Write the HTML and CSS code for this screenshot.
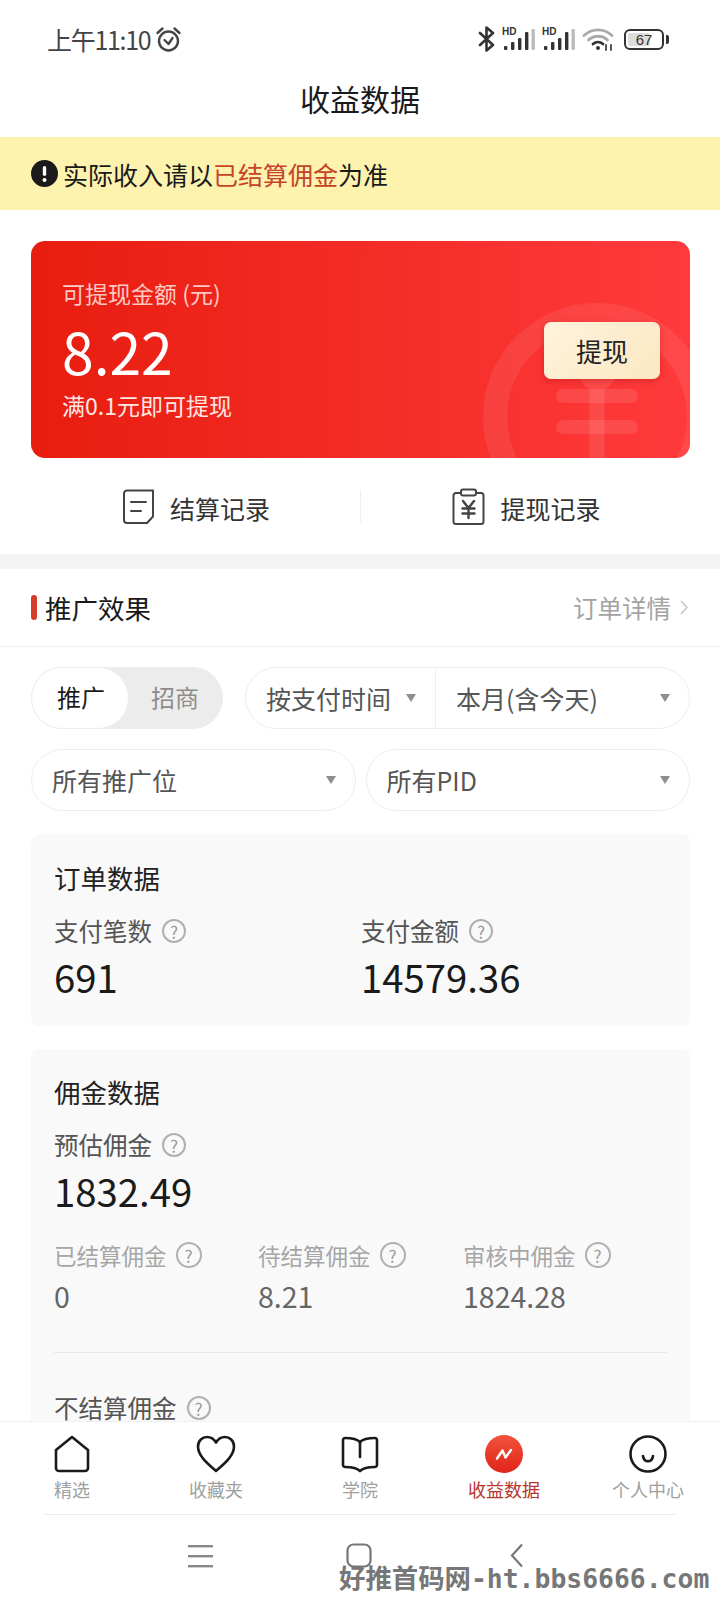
FILE: index.html
```html
<!DOCTYPE html>
<html lang="zh-CN">
<head>
    <meta charset="UTF-8">
    <meta name="viewport" content="width=device-width, initial-scale=1.0">
    <title>收益数据</title>
    <link rel="stylesheet" href="styles.css">
</head>
<body>
    <div class="phone">
        <!-- 状态栏 -->
        <div class="status-bar">
            <div class="status-left">
                <span class="status-time">上午11:10</span>
                <svg width="27" height="27" viewBox="0 0 27 27" fill="none" stroke="#444" stroke-width="2.4" stroke-linecap="round" stroke-linejoin="round">
                    <circle cx="13.5" cy="15" r="9.5"/>
                    <path d="M9.5 14l4 4 4-6"/>
                    <path d="M2.5 7l5-4.5M24.500 7l-5-4.500"/>
                </svg>
            </div>
            <div class="status-right">
                <svg width="17" height="26" viewBox="0 0 17 26" fill="none" stroke="#333" stroke-width="2.600" stroke-linejoin="round" stroke-linecap="round">
                    <path d="M2 7l13 12-6.500 5.500V1.500L15 7 2 19"/>
                </svg>
                <svg class="signal" width="33" height="24" viewBox="0 0 33 24">
                    <text x="0" y="8" class="signal-text">HD</text>
                    <rect x="2" y="19" width="3.400" height="4" rx="1" fill="#333"/>
                    <rect x="9" y="15" width="3.400" height="8" rx="1" fill="#333"/>
                    <rect x="16" y="11" width="3.400" height="12" rx="1" fill="#333"/>
                    <rect x="23" y="5" width="3.400" height="18" rx="1" fill="#333"/>
                    <rect x="29.500" y="2" width="3.400" height="21" rx="1" fill="#bbb"/>
                </svg>
                <svg class="signal" width="33" height="24" viewBox="0 0 33 24">
                    <text x="0" y="8" class="signal-text">HD</text>
                    <rect x="2" y="19" width="3.400" height="4" rx="1" fill="#333"/>
                    <rect x="9" y="15" width="3.400" height="8" rx="1" fill="#333"/>
                    <rect x="16" y="11" width="3.400" height="12" rx="1" fill="#333"/>
                    <rect x="23" y="5" width="3.400" height="18" rx="1" fill="#333"/>
                    <rect x="29.500" y="2" width="3.400" height="21" rx="1" fill="#bbb"/>
                </svg>
                <svg width="32" height="24" viewBox="0 0 32 24" fill="none" stroke-linecap="round">
                    <path d="M2 8.500C10 1 22 1 30 8.500" stroke="#aaa" stroke-width="2.800"/>
                    <path d="M6.500 13c5.500-5 13.500-5 19 0" stroke="#aaa" stroke-width="2.800"/>
                    <path d="M11 17c3-2.500 7-2.500 10 0" stroke="#333" stroke-width="2.800"/>
                    <circle cx="16" cy="21" r="2" fill="#333"/>
                    <path d="M24 18v5M29 18v5" stroke="#444" stroke-width="1.800"/>
                </svg>
                <div class="battery">
                    <div class="battery-body">
                        <div class="battery-fill"></div>
                        <span class="battery-num">67</span>
                    </div>
                    <div class="battery-cap"></div>
                </div>
            </div>
        </div>

        <div class="title-bar">收益数据</div>

        <main class="content">
            <div class="notice">
                <svg width="27" height="27" viewBox="0 0 27 27">
                    <circle cx="13.500" cy="13.500" r="13.500" fill="#1a1a1a"/>
                    <rect x="11.800" y="6" width="3.400" height="10" rx="1.700" fill="#fff"/>
                    <circle cx="13.500" cy="20" r="2" fill="#fff"/>
                </svg>
                <span>实际收入请以<em class="notice-red">已结算佣金</em>为准</span>
            </div>

            <div class="balance-wrap">
                <div class="balance-card">
                    <svg class="yuan-mark" width="228" height="228" viewBox="0 0 228 228" fill="none">
                        <circle cx="114" cy="114" r="102" stroke="#fff" stroke-opacity="0.08" stroke-width="24"/>
                        <path d="M80 93h68M80 124h68" stroke="#fff" stroke-opacity="0.1" stroke-width="14" stroke-linecap="round"/>
                        <path d="M114 72v120M90 60l24 24 24-24" stroke="#fff" stroke-opacity="0.1" stroke-width="15"/>
                    </svg>
                    <div class="balance-info">
                        <div class="balance-label">可提现金额 (元)</div>
                        <div class="balance-num">8.22</div>
                        <div class="balance-tip">满0.1元即可提现</div>
                    </div>
                    <div class="withdraw-btn">提现</div>
                </div>
            </div>

            <div class="records">
                <div class="record-item record-item-left">
                    <svg width="33" height="35" viewBox="0 0 33 35" fill="none" stroke="#444" stroke-width="2" stroke-linejoin="round" stroke-linecap="round">
                        <path d="M5 1.500h26v26l-6 6.500H5a3 3 0 0 1-3-3V4.500a3 3 0 0 1 3-3z"/>
                        <path d="M9 13h15M9 22h10"/>
                    </svg>
                    <span>结算记录</span>
                </div>
                <div class="record-item record-item-right">
                    <svg width="33" height="37" viewBox="0 0 33 37" fill="none" stroke="#444" stroke-width="2" stroke-linejoin="round" stroke-linecap="round">
                        <path d="M9 5H4a2.500 2.500 0 0 0-2.500 2.500v26A2.500 2.500 0 0 0 4 36h25a2.500 2.500 0 0 0 2.500-2.500v-26A2.500 2.500 0 0 0 29 5h-5"/>
                        <rect x="9" y="1.500" width="15" height="6" rx="2"/>
                        <path d="M11 13l5.500 7 5.500-7M10.500 20.500h12M10.500 25.500h12M16.500 20v10" stroke-width="2.400"/>
                    </svg>
                    <span>提现记录</span>
                </div>
            </div>

            <div class="gray-band"></div>

            <div class="section-head">
                <div class="section-title"><i class="section-mark"></i>推广效果</div>
                <div class="section-link">
                    <span>订单详情</span>
                    <svg width="8" height="15" viewBox="0 0 8 15" fill="none" stroke="#c4c4c4" stroke-width="1.500"><path d="M1 1l6 6.500L1 14"/></svg>
                </div>
            </div>

            <div class="filters">
                <div class="filter-row">
                    <div class="toggle">
                        <div class="toggle-on">推广</div>
                        <div class="toggle-off">招商</div>
                    </div>
                    <div class="pill pill-double">
                        <div class="pill-part pill-part-time">
                            <span>按支付时间</span><i class="arrow"></i>
                        </div>
                        <div class="pill-part pill-part-month">
                            <span>本月(含今天)</span><i class="arrow"></i>
                        </div>
                    </div>
                </div>
                <div class="filter-row filter-row-two">
                    <div class="pill pill-single"><span>所有推广位</span><i class="arrow"></i></div>
                    <div class="pill pill-single"><span>所有PID</span><i class="arrow"></i></div>
                </div>
            </div>

            <div class="data-card">
                <div class="card-title">订单数据</div>
                <div class="two-cols">
                    <div>
                        <div class="data-label">支付笔数<i class="help">?</i></div>
                        <div class="data-num">691</div>
                    </div>
                    <div>
                        <div class="data-label">支付金额<i class="help">?</i></div>
                        <div class="data-num">14579.36</div>
                    </div>
                </div>
            </div>

            <div class="data-card data-card-long">
                <div class="card-title">佣金数据</div>
                <div class="data-label">预估佣金<i class="help">?</i></div>
                <div class="data-num">1832.49</div>
                <div class="three-cols">
                    <div>
                        <div class="sub-label">已结算佣金<i class="help help-sub">?</i></div>
                        <div class="sub-num">0</div>
                    </div>
                    <div>
                        <div class="sub-label">待结算佣金<i class="help help-sub">?</i></div>
                        <div class="sub-num">8.21</div>
                    </div>
                    <div>
                        <div class="sub-label">审核中佣金<i class="help help-sub">?</i></div>
                        <div class="sub-num">1824.28</div>
                    </div>
                </div>
                <div class="card-line"></div>
                <div class="data-label">不结算佣金<i class="help">?</i></div>
            </div>
        </main>

        <!-- 底部导航 -->
        <nav class="tab-bar">
            <div class="tab">
                <svg width="36" height="38" viewBox="0 0 36 38" fill="none" stroke="#1a1a1a" stroke-width="2.600" stroke-linejoin="round">
                    <path d="M18 2L34 15v18a3 3 0 0 1-3 3H5a3 3 0 0 1-3-3V15z"/>
                </svg>
                <span>精选</span>
            </div>
            <div class="tab">
                <svg width="40" height="38" viewBox="0 0 40 38" fill="none" stroke="#1a1a1a" stroke-width="2.600" stroke-linejoin="round">
                    <path d="M20 36C12 29 2 21 2 11.500 2 5.500 6.500 2 11 2c4 0 7 2 9 5.500C22 4 25 2 29 2c4.500 0 9 3.500 9 9.500C38 21 28 29 20 36z"/>
                </svg>
                <span>收藏夹</span>
            </div>
            <div class="tab">
                <svg width="38" height="38" viewBox="0 0 38 38" fill="none" stroke="#1a1a1a" stroke-width="2.600" stroke-linejoin="round" stroke-linecap="round">
                    <path d="M19 7c-3-3-8-4-15-4-1 0-2 1-2 2v25c0 1 1 2 2 2 7 0 12 1 15 4 3-3 8-4 15-4 1 0 2-1 2-2V5c0-1-1-2-2-2-7 0-12 1-15 4z"/>
                    <path d="M19 7v15"/>
                </svg>
                <span>学院</span>
            </div>
            <div class="tab tab-active">
                <div class="tab-badge">
                    <svg width="18" height="12" viewBox="0 0 18 12" fill="none" stroke="#fff" stroke-width="2.400" stroke-linejoin="round" stroke-linecap="round">
                        <path d="M2 10.500L7.500 2.500 10.500 9.500 16 2"/>
                    </svg>
                </div>
                <span>收益数据</span>
            </div>
            <div class="tab">
                <svg width="40" height="38" viewBox="0 0 40 38" fill="none" stroke="#1a1a1a" stroke-width="2.600" stroke-linecap="round">
                    <circle cx="20" cy="19" r="17.500"/>
                    <path d="M15 21c1 7 9 7 10 0"/>
                </svg>
                <span>个人中心</span>
            </div>
        </nav>

        <div class="nav-bar">
            <svg width="25" height="24" viewBox="0 0 25 24" fill="#888"><rect y="1" width="25" height="2.400"/><rect y="11" width="25" height="2.400"/><rect y="21" width="25" height="2.400"/></svg>
            <svg width="26" height="25" viewBox="0 0 26 25" fill="none" stroke="#777" stroke-width="2.200"><rect x="1.500" y="1.500" width="23" height="22" rx="6"/></svg>
            <svg class="nav-back" width="13" height="25" viewBox="0 0 13 25" fill="none" stroke="#777" stroke-width="2.200"><path d="M12 1.500L2 12.500l10 11"/></svg>
        </div>

        <!-- 水印 -->
        <div class="watermark">好推首码网-ht.bbs6666.com</div>
    </div>
</body>
</html>
```

FILE: styles.css
```css
* {
    box-sizing: border-box;
}

body {
    margin: 0;
    font-family: "Noto Sans CJK SC", "Noto Sans", sans-serif;
    background-color: #fff;
    color: #1a1a1a;
}

.phone {
    position: relative;
    display: flex;
    flex-direction: column;
    width: 720px;
    height: 1600px;
    overflow: hidden;
}

/* 状态栏 */
.status-bar {
    display: flex;
    justify-content: space-between;
    align-items: center;
    flex-shrink: 0;
    height: 60px;
    padding: 18px 51px 0 47px;
}

.status-left {
    display: flex;
    align-items: center;
    gap: 5px;
}

.status-time {
    font-size: 25px;
    line-height: 34px;
    letter-spacing: -1.3px;
    color: #444;
}

.status-right {
    display: flex;
    align-items: center;
    gap: 7px;
}

.signal-text {
    font-family: "Liberation Sans", sans-serif;
    font-size: 10px;
    font-weight: bold;
    fill: #333;
}

.battery {
    display: flex;
    align-items: center;
    gap: 2px;
    margin-left: 3px;
}

.battery-body {
    position: relative;
    display: flex;
    justify-content: center;
    align-items: center;
    width: 40px;
    height: 21px;
    border: 2px solid #333;
    border-radius: 6px;
    overflow: hidden;
}

.battery-fill {
    position: absolute;
    top: 2px;
    left: 2px;
    bottom: 2px;
    width: 22px;
    background-color: #ddd;
    border-radius: 2px;
}

.battery-num {
    position: relative;
    font-family: "Liberation Sans", sans-serif;
    font-size: 15px;
    line-height: 17px;
    color: #333;
}

.battery-cap {
    width: 3px;
    height: 9px;
    background-color: #333;
    border-radius: 0 2px 2px 0;
}

.title-bar {
    flex-shrink: 0;
    height: 77px;
    line-height: 77px;
    text-align: center;
    font-size: 30px;
}

/* 内容区 */
.content {
    flex: 1;
    min-height: 0;
    overflow: hidden;
}

.notice {
    display: flex;
    align-items: center;
    gap: 5px;
    height: 73px;
    padding-left: 31px;
    background-color: #fdf2ae;
    font-size: 25px;
}

.notice-red {
    font-style: normal;
    color: #c5432a;
}

.balance-wrap {
    padding: 31px 30px 0 31px;
}

.balance-card {
    position: relative;
    display: flex;
    justify-content: space-between;
    align-items: center;
    height: 217px;
    padding: 0 30px 0 31px;
    border-radius: 14px;
    background: linear-gradient(90deg, #e81d0f, #ff3a3c);
    overflow: hidden;
    color: #fff;
}

.yuan-mark {
    position: absolute;
    top: 62px;
    left: 452px;
}

.balance-info {
    position: relative;
}

.balance-label {
    font-size: 23px;
    line-height: 32px;
    color: #ffc9c3;
}

.balance-num {
    margin-top: 6px;
    font-size: 57px;
    line-height: 70px;
}

.balance-tip {
    margin-top: 3px;
    font-size: 23px;
    line-height: 34px;
    color: #ffe6e2;
}

.withdraw-btn {
    position: relative;
    width: 116px;
    height: 57px;
    margin-top: 2px;
    line-height: 57px;
    text-align: center;
    font-size: 26px;
    color: #222;
    background: linear-gradient(135deg, #fff3dc, #fbe7c2);
    border-radius: 7px;
    box-shadow: 0 2px 6px rgba(120, 0, 0, 0.25);
}

.records {
    display: flex;
    align-items: center;
    height: 96px;
}

.record-item {
    display: flex;
    justify-content: center;
    align-items: center;
    gap: 15px;
    width: 360px;
    height: 32px;
    font-size: 25px;
    color: #333;
}

.record-item span {
    margin-top: 3px;
}

.record-item-left {
    padding-left: 32px;
}

.record-item-right {
    padding-right: 28px;
    border-left: 1px solid #eee;
}

.gray-band {
    height: 15px;
    background-color: #f4f4f4;
}

.section-head {
    display: flex;
    justify-content: space-between;
    align-items: center;
    height: 78px;
    padding: 0 32px 0 31px;
    border-bottom: 1px solid #f0f0f0;
}

.section-title {
    display: flex;
    align-items: center;
    gap: 8px;
    font-size: 26.500px;
}

.section-mark {
    width: 6px;
    height: 25px;
    background-color: #d63c2a;
    border-radius: 3px;
}

.section-link {
    display: flex;
    align-items: center;
    gap: 9px;
    padding-left: 2px;
    font-size: 24.500px;
    color: #a3a3a3;
}

/* 筛选 */
.filters {
    display: flex;
    flex-direction: column;
    gap: 20px;
    padding: 20px 30px 23px 31px;
}

.filter-row {
    display: flex;
    gap: 22px;
    height: 62px;
}

.filter-row-two {
    gap: 10px;
}

.toggle {
    display: flex;
    flex-shrink: 0;
    width: 192px;
    border-radius: 31px;
    background-color: #ececec;
    font-size: 24px;
    line-height: 60px;
}

.toggle-on {
    width: 98px;
    padding-left: 25px;
    background-color: #fff;
    border: 1px solid #eee;
    border-radius: 31px;
    line-height: 58px;
}

.toggle-off {
    padding-left: 22px;
    color: #8c8c8c;
}

.pill {
    display: flex;
    align-items: center;
    border: 1px solid #eee;
    border-radius: 31px;
    font-size: 25px;
    color: #555;
}

.pill-double {
    flex: 1;
}

.pill-part {
    display: flex;
    align-items: center;
    height: 100%;
}

.pill-part-time {
    gap: 15px;
    width: 190px;
    padding-left: 20px;
    border-right: 1px solid #eee;
}

.pill-part-month {
    flex: 1;
    justify-content: space-between;
    padding: 0 19px 0 20px;
}

.pill-single {
    flex: 1;
    justify-content: space-between;
    padding: 0 19px 0 20px;
}

.arrow {
    flex-shrink: 0;
    width: 0;
    height: 0;
    border-left: 5.500px solid transparent;
    border-right: 5.500px solid transparent;
    border-top: 8px solid #8e8e8e;
}

/* 数据卡片 */
.data-card {
    margin: 0 30px 23px 31px;
    padding: 26px 23px 26px;
    background-color: #f9f9f9;
    border-radius: 8px;
}

.card-title {
    font-size: 26.500px;
    line-height: 36px;
    color: #222;
}

.two-cols {
    display: grid;
    grid-template-columns: 307px 1fr;
}

.data-label {
    display: flex;
    align-items: center;
    gap: 10px;
    margin-top: 18px;
    font-size: 24.500px;
    line-height: 34px;
    color: #555;
}

.help {
    display: inline-flex;
    justify-content: center;
    align-items: center;
    width: 24px;
    height: 24px;
    border: 2px solid #b0b0b0;
    border-radius: 50%;
    font-style: normal;
    font-size: 17px;
    line-height: 1;
    color: #999;
}

.help-sub {
    width: 26px;
    height: 26px;
}

.data-num {
    margin-top: 6px;
    font-size: 38.300px;
    line-height: 46px;
    color: #1a1a1a;
}

.data-card-long {
    margin-bottom: 0;
    padding-top: 25px;
    padding-bottom: 60px;
}

.three-cols {
    display: grid;
    grid-template-columns: 204px 205px 1fr;
    margin-top: 25px;
}

.sub-label {
    display: flex;
    align-items: center;
    gap: 9px;
    font-size: 22.500px;
    line-height: 32px;
    color: #a6a6a6;
}

.sub-num {
    margin-top: 7px;
    font-size: 28.500px;
    line-height: 36px;
    color: #666;
}

.card-line {
    height: 1px;
    margin: 38px 0 38px;
    background-color: #e9e9e9;
}

/* 底部导航 */
.tab-bar {
    display: grid;
    grid-template-columns: repeat(5, 144px);
    flex-shrink: 0;
    height: 93px;
    padding-top: 13px;
    background-color: #fff;
    border-top: 1px solid #f1f1f1;
}

.tab {
    display: flex;
    flex-direction: column;
    align-items: center;
    font-size: 18px;
    line-height: 26px;
    color: #a0a0a0;
}

.tab span {
    margin-top: 3px;
}

.tab-active {
    color: #b8352d;
}

.tab-badge {
    display: flex;
    justify-content: center;
    align-items: center;
    width: 38px;
    height: 38px;
    border-radius: 50%;
    background: linear-gradient(180deg, #f2523a, #e0241a);
}

.nav-bar {
    position: relative;
    display: flex;
    justify-content: center;
    align-items: center;
    flex-shrink: 0;
    gap: 133px;
    height: 86px;
    margin: 0;
    padding-right: 10px;
    padding-bottom: 4px;
    border-top: 1px solid #eee;
    border-image: linear-gradient(90deg, #fff 45px, #eee 45px, #eee 675px, #fff 675px) 1;
}

.nav-back {
    margin-left: 5px;
}

.watermark {
    position: absolute;
    left: 339px;
    bottom: 3px;
    font-family: "DejaVu Sans Mono", "Noto Sans CJK SC", monospace;
    font-size: 26.400px;
    font-weight: bold;
    line-height: 36px;
    white-space: nowrap;
    color: #777;
}
```
